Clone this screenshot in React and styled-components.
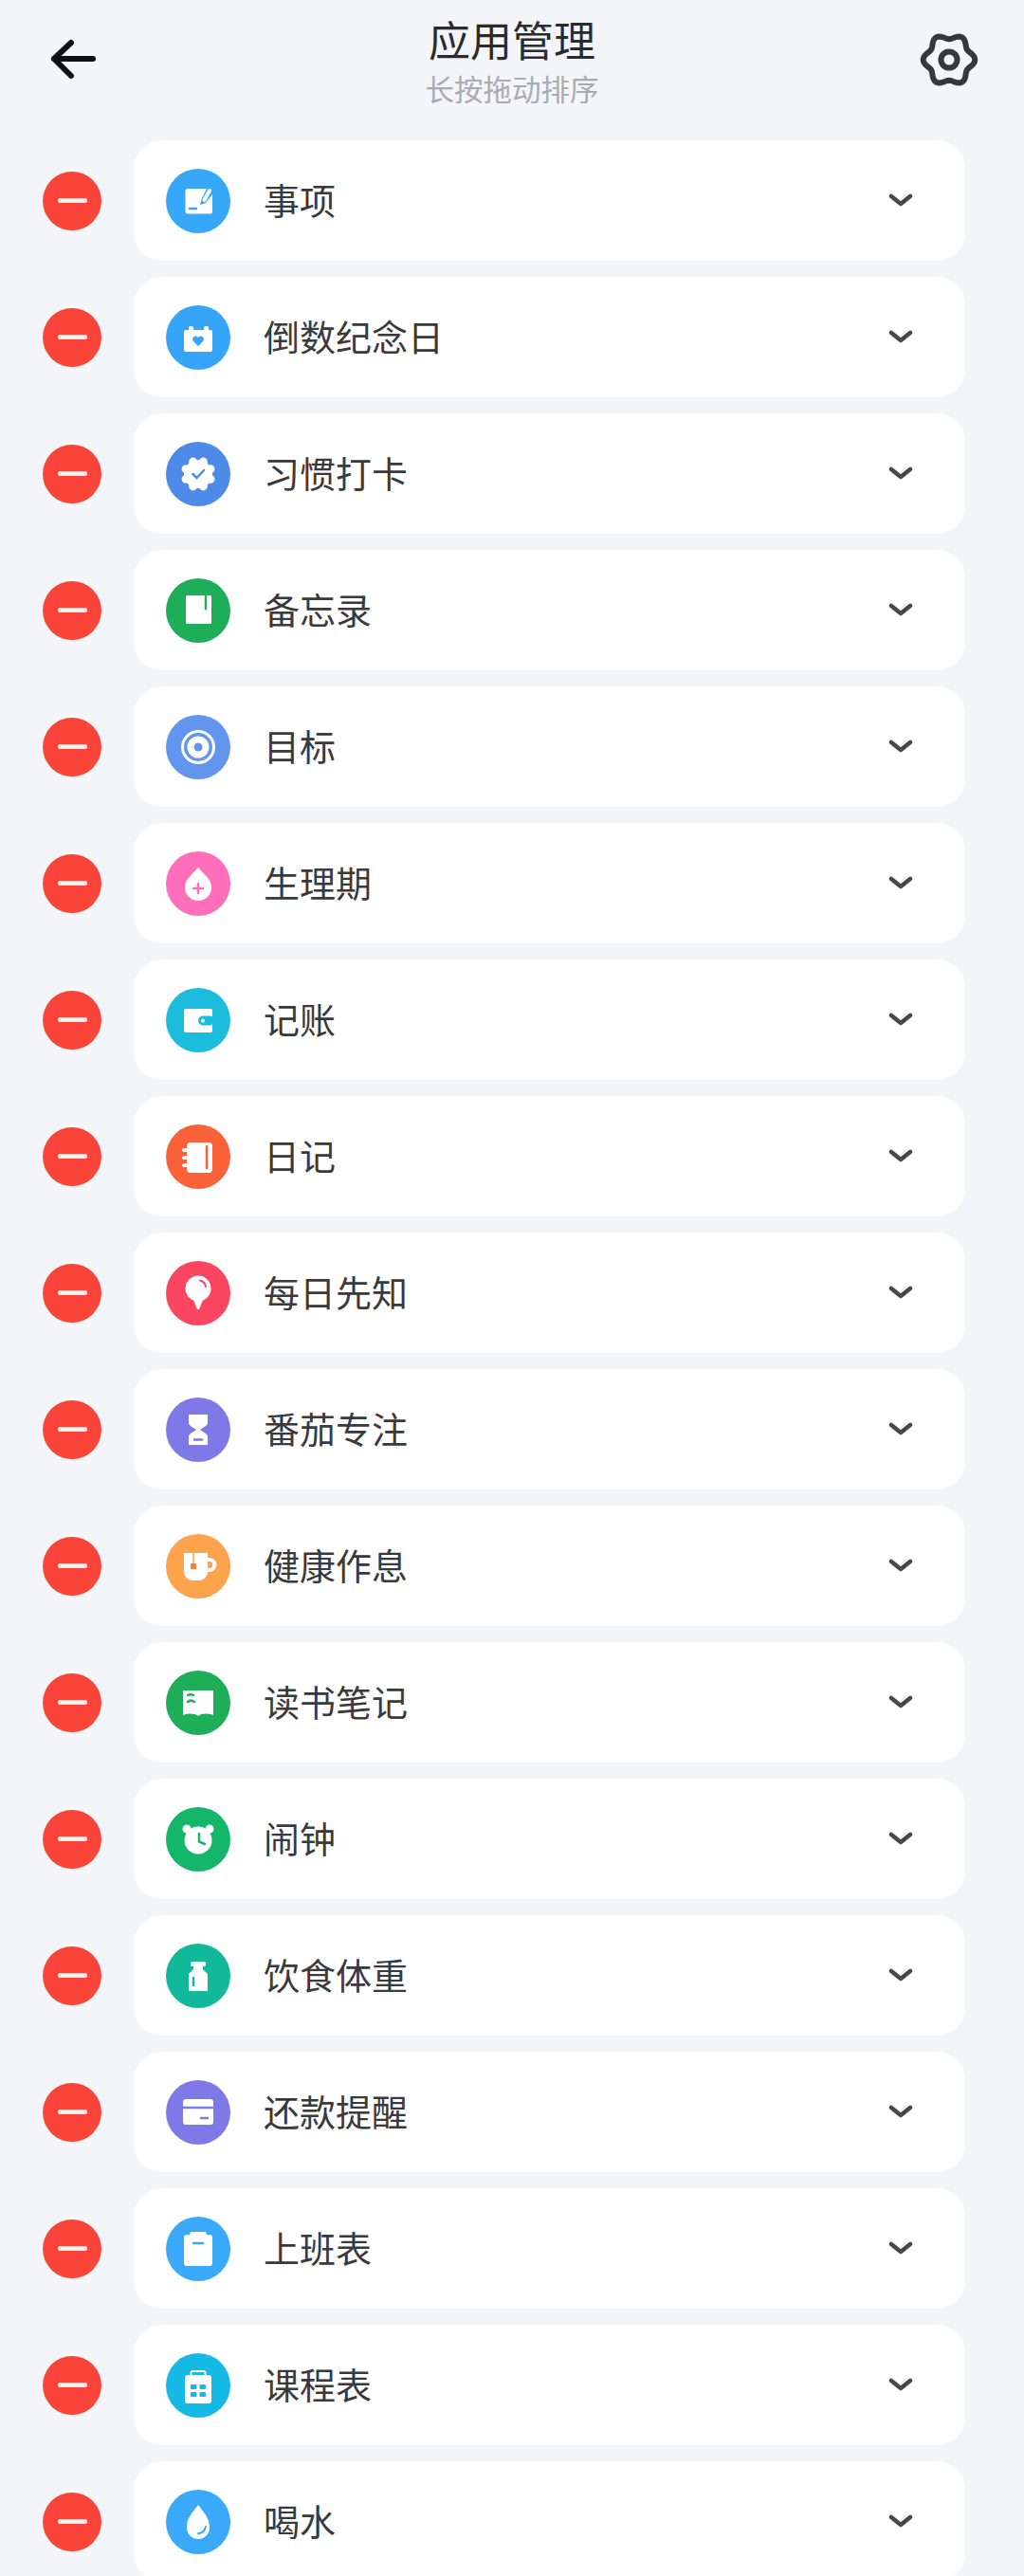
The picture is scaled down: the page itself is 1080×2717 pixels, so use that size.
import React from 'react'
import styled, { createGlobalStyle } from 'styled-components'

const GlobalStyle = createGlobalStyle`
  html, body { margin: 0; padding: 0; background: #f3f5f9; }
  body { font-family: "Noto Sans CJK SC", "Noto Sans", sans-serif; }
`;

const Page = styled.div`
  width: 1080px;
  height: 2717px;
  overflow: hidden;
  background: #f3f5f9;
`;
const Header = styled.header`
  height: 148px;
  display: grid;
  grid-template-columns: 1fr auto 1fr;
  align-items: start;
`;
const BackButton = styled.div`
  justify-self: start;
  margin: 40px 0 0 52px;
  width: 50px;
  height: 46px;
  color: #111;
`;
const SettingsButton = styled.div`
  justify-self: end;
  margin: 30px 46px 0 0;
  width: 66px;
  height: 66px;
  color: #38383c;
`;
const TitleBlock = styled.div`
  display: flex;
  flex-direction: column;
  align-items: center;
`;
const Title = styled.h1`
  margin: 10px 0 0;
  font-size: 44px;
  line-height: 62px;
  font-weight: 400;
  color: #2b2b2e;
`;
const Subtitle = styled.div`
  margin-top: 1px;
  font-size: 30.5px;
  line-height: 40px;
  color: #a9abb0;
`;
const List = styled.div`
  display: flex;
  flex-direction: column;
  gap: 17px;
`;
const Row = styled.div`
  display: flex;
  align-items: center;
  padding-left: 45px;
  gap: 34px;
`;
const RemoveButton = styled.div`
  width: 62px;
  height: 62px;
  border-radius: 50%;
  background: #fb4439;
  display: flex;
  align-items: center;
  justify-content: center;
  flex: none;
  &::after {
    content: "";
    width: 31px;
    height: 5px;
    border-radius: 2px;
    background: #ffeeea;
  }
`;
const Card = styled.div`
  width: 877px;
  height: 127px;
  flex: none;
  background: #fff;
  border-radius: 30px;
  display: flex;
  align-items: center;
  padding: 0 55px 0 34px;
  box-sizing: border-box;
`;
const IconDisc = styled.div`
  width: 68px;
  height: 68px;
  border-radius: 50%;
  flex: none;
  background: ${props => props.$bg};
  color: ${props => props.$bg};
  svg { display: block; }
`;
const Name = styled.div`
  flex: 1;
  margin: -4px 0 0 35px;
  font-size: 38px;
  line-height: 54px;
  color: #3a3a3d;
`;
const Chevron = styled.svg`
  flex: none;
  width: 26px;
  height: 14px;
  margin-top: -1px;
`;

const gearPath = () => {
  const pts = []
  for (let i = 0; i < 72; i++) {
    const a = (i / 72) * Math.PI * 2
    const r = 24.5 + 2.8 * Math.cos(6 * a)
    pts.push(`${(33 + r * Math.cos(a)).toFixed(2)} ${(33 + r * Math.sin(a)).toFixed(2)}`)
  }
  return `M${pts.join('L')}Z`
}

const Glyph = ({ children }) => (
  <svg width="68" height="68" viewBox="-34 -34 68 68" fill="#fff">{children}</svg>
)

const cut = { stroke: 'currentColor', fill: 'none', strokeLinecap: 'round' }

const icons = {
  note: (
    <>
      <path d="M-11-13H9L4 -3 2 4 8 2 15-7V11a2.500 2.500 0 0 1-2.500 2.500H-11A2.500 2.500 0 0 1-13.500 11V-10.500A2.500 2.500 0 0 1-11-13Z" />
      <path d="M6.500 -1 12-11" stroke="#fff" strokeWidth="4" strokeLinecap="round" />
      <path d="M-9 8H-2" {...cut} strokeWidth="2.500" />
    </>
  ),
  calendar: (
    <>
      <rect x="-15" y="-8" width="30" height="23" rx="2" />
      <rect x="-10" y="-12" width="5" height="7" rx="2" />
      <rect x="6" y="-12" width="5" height="7" rx="2" />
      <path d="M0 9-5.500 3.500A3.300 3.300 0 0 1-1 -1L0 0 1-1A3.300 3.300 0 0 1 5.500 3.500Z" fill="currentColor" />
    </>
  ),
  badge: (
    <>
      <circle r="15" />
      {[0, 45, 90, 135, 180, 225, 270, 315].map(a => (
        <circle key={a} r="4.500" cx={14 * Math.cos((a + 22.5) * Math.PI / 180)} cy={14 * Math.sin((a + 22.5) * Math.PI / 180)} />
      ))}
      <path d="M-5.500 0-1.500 4 6-4" {...cut} strokeWidth="2.500" />
    </>
  ),
  book: (
    <>
      <rect x="-13" y="-16" width="27" height="30" rx="1.500" />
      <path d="M8-15V-2" {...cut} strokeWidth="2.500" />
    </>
  ),
  target: (
    <>
      <circle r="18" />
      <circle r="15" fill="currentColor" />
      <circle r="11.500" />
      <circle r="4.500" fill="currentColor" />
    </>
  ),
  drop: (
    <>
      <path d="M0-17C5-11 14-5 14 4A14 14 0 0 1-14 4C-14-5-5-11 0-17Z" />
      <path d="M-5 5H5M0 0V10" {...cut} strokeWidth="2.500" />
    </>
  ),
  wallet: (
    <>
      <rect x="-15" y="-12" width="30" height="25" rx="2" />
      <rect x="0" y="-4.500" width="17" height="10" rx="5" fill="currentColor" />
      <circle cx="5" cy="0.500" r="2" />
    </>
  ),
  diary: (
    <>
      <rect x="-12" y="-15" width="27" height="32" rx="4" />
      <path d="M-15-7H-10M-15 1H-10M-15 9H-10" stroke="#fff" strokeWidth="4" strokeLinecap="round" />
      <path d="M9-11V12" {...cut} strokeWidth="2.500" />
    </>
  ),
  balloon: (
    <>
      <circle cy="-5" r="13.500" />
      <path d="M-5 7H5L1 17H-1Z" />
      <path d="M2-13.500A8 8 0 0 1 8-7" {...cut} strokeWidth="2" />
    </>
  ),
  hourglass: (
    <>
      <path d="M-10-16H10V-7C10-4 4-2 2 0 4 2 10 4 10 7V16H-10V7C-10 4-4 2-2 0-4-2-10-4-10-7Z" />
      <path d="M-4 10.500H4" {...cut} strokeWidth="2.500" />
    </>
  ),
  cup: (
    <>
      <path d="M-15-14H10V6A9 9 0 0 1 1 15H-6A9 9 0 0 1-15 6Z" />
      <path d="M9-7H12A5.500 5.500 0 0 1 12 4H8" fill="none" stroke="#fff" strokeWidth="4" />
      <path d="M-5-14V-3" {...cut} strokeWidth="1.500" />
      <rect x="-8" y="-3" width="6" height="6" rx="1" fill="#f5813a" />
    </>
  ),
  reader: (
    <>
      <path d="M-16-13H16V13C10 11 4 11 0 14-4 11-10 11-16 13Z" />
      <path d="M-11-8C-9-9-7-9-5-8M-11-1C-9-3-7-3-4-1" {...cut} strokeWidth="2.500" />
    </>
  ),
  alarm: (
    <>
      <circle cy="1" r="14.500" />
      <circle cx="-12" cy="-11" r="4.500" />
      <circle cx="12" cy="-11" r="4.500" />
      <path d="M1-6V2.500L7 5" {...cut} strokeWidth="2.500" />
    </>
  ),
  bottle: (
    <>
      <rect x="-8" y="-15" width="16" height="5" rx="1.500" />
      <path d="M-5-11H5V-7L10-2V16H-10V-2L-5-7Z" />
      <path d="M-5 2V10" {...cut} strokeWidth="2.500" />
    </>
  ),
  card: (
    <>
      <rect x="-16" y="-14" width="32" height="27" rx="3" />
      <path d="M-16-5H16" stroke="currentColor" strokeWidth="2.500" />
      <path d="M3 6H10" {...cut} strokeWidth="2.500" />
    </>
  ),
  clipboard: (
    <>
      <path d="M-8-18H8L9-15H12A3 3 0 0 1 15-12V15A3 3 0 0 1 12 18H-12A3 3 0 0 1-15 15V-12A3 3 0 0 1-12-15H-9Z" />
      <path d="M-5-6H5" {...cut} strokeWidth="2.500" />
    </>
  ),
  schedule: (
    <>
      <rect x="-14" y="-11" width="28" height="30" rx="3" />
      <rect x="-7.500" y="-15" width="15" height="6" rx="2" fill="none" stroke="#fff" strokeWidth="2" />
      <rect x="-8" y="-1" width="6.500" height="5" rx="1" fill="currentColor" />
      <rect x="1.500" y="-1" width="6.500" height="5" rx="1" fill="currentColor" />
      <rect x="-8" y="7" width="6.500" height="5" rx="1" fill="currentColor" />
      <rect x="1.500" y="7" width="6.500" height="5" rx="1" fill="currentColor" />
    </>
  ),
  water: (
    <>
      <path d="M0-18C5-11 12-5 12 6A12 12 0 0 1-12 6C-12-5-5-11 0-18Z" />
      <path d="M0 12C4 12 7 9 8 5" {...cut} strokeWidth="2" />
    </>
  ),
}

const apps = [
  ['事项', '#37a7f8', 'note'],
  ['倒数纪念日', '#37a5f7', 'calendar'],
  ['习惯打卡', '#4e8ae8', 'badge'],
  ['备忘录', '#1fae58', 'book'],
  ['目标', '#6195ee', 'target'],
  ['生理期', '#ff6fb9', 'drop'],
  ['记账', '#1cbcdc', 'wallet'],
  ['日记', '#fb6138', 'diary'],
  ['每日先知', '#fb4661', 'balloon'],
  ['番茄专注', '#7f79e8', 'hourglass'],
  ['健康作息', '#fda34c', 'cup'],
  ['读书笔记', '#1fae58', 'reader'],
  ['闹钟', '#14b669', 'alarm'],
  ['饮食体重', '#12b89a', 'bottle'],
  ['还款提醒', '#7f79e8', 'card'],
  ['上班表', '#3aa9f9', 'clipboard'],
  ['课程表', '#16b8e6', 'schedule'],
  ['喝水', '#3aa9f9', 'water'],
]

const App = () => {
  return (
    <Page>
      <GlobalStyle />
      <Header>
        <BackButton>
          <svg width="50" height="46" viewBox="0 0 50 46" fill="none" stroke="currentColor" strokeWidth="6" strokeLinecap="round" strokeLinejoin="round">
            <path d="M5 22H46M23 5 5 22 23 40" />
          </svg>
        </BackButton>
        <TitleBlock>
          <Title>应用管理</Title>
          <Subtitle>长按拖动排序</Subtitle>
        </TitleBlock>
        <SettingsButton>
          <svg width="66" height="66" viewBox="0 0 66 66" fill="none" stroke="currentColor" strokeWidth="6" strokeLinejoin="round">
            <path d={gearPath()} />
            <circle cx="33" cy="33" r="8.500" />
          </svg>
        </SettingsButton>
      </Header>
      <List>
        {apps.map(([name, color, icon]) => (
          <Row key={name}>
            <RemoveButton />
            <Card>
              <IconDisc $bg={color}>
                <Glyph>{icons[icon]}</Glyph>
              </IconDisc>
              <Name>{name}</Name>
              <Chevron viewBox="0 0 26 14" fill="none" stroke="#48484c" strokeWidth="4.500" strokeLinecap="round" strokeLinejoin="round">
                <path d="M3 3 13 11 23 3" />
              </Chevron>
            </Card>
          </Row>
        ))}
      </List>
    </Page>
  )
}

export default App
